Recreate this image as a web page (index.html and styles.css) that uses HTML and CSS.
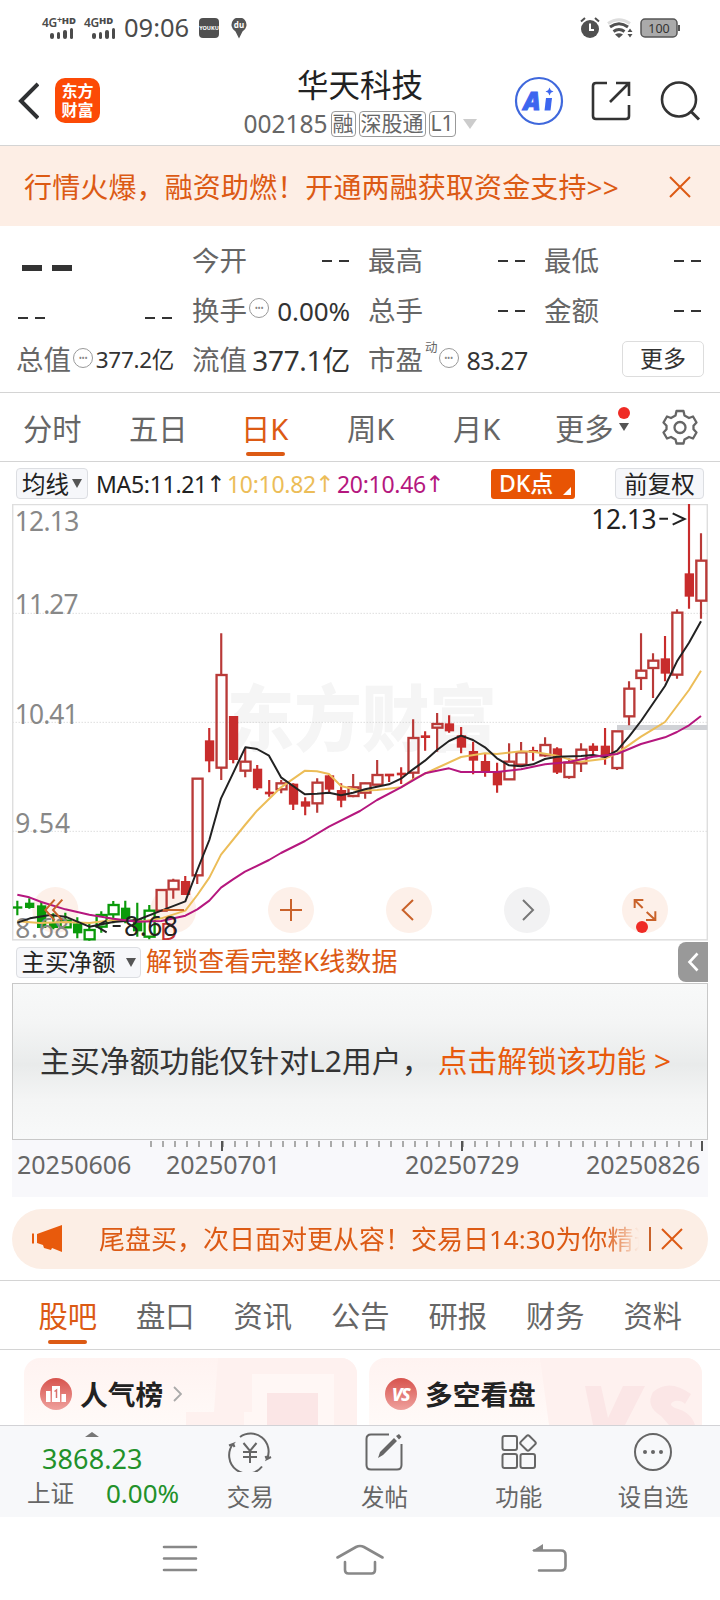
FILE: index.html
```html
<!DOCTYPE html>
<html lang="zh-CN">
<head>
<meta charset="utf-8">
<title>华天科技 002185</title>
<link rel="stylesheet" href="styles.css">
</head>
<body>
<div class="phone">

  <div class="status">
    <div class="sim"><span>4G<sup class="plus">+</sup><b>HD</b></span><i class="bars"><i></i><i></i><i></i><i></i></i></div>
    <div class="sim sim2"><span>4G<b>HD</b></span><i class="bars"><i></i><i></i><i></i><i></i></i></div>
    <span class="clock">09:06</span>
    <span class="youku">YOUKU</span>
    <svg class="pin" width="16" height="21" viewBox="0 0 16 21"><path d="M8 20.500 4.500 13.500A7.500 7.500 0 1 1 11.500 13.500Z" fill="#555"/><text x="8" y="10" font-size="8" font-weight="700" fill="#fff" text-anchor="middle">du</text></svg>
    <svg class="status-right" width="102" height="24" viewBox="0 0 102 24">
      <circle cx="10" cy="13" r="9" fill="#505050"/><path d="M10 7.500V14H14" fill="none" stroke="#fff" stroke-width="2"/><path d="M1 5.500 5 2M19 5.500 15 2" stroke="#505050" stroke-width="2"/>
      <path d="M28 7.500Q39 0 50 7.500" fill="none" stroke="#ddd" stroke-width="3"/>
      <path d="M30 11Q39 4.500 48 11M33.500 15.500Q39 11.500 44.500 15.500" fill="none" stroke="#505050" stroke-width="3"/><path d="M39 22 35 18.500Q39 16 43 18.500Z" fill="#505050"/><path d="M47.500 16 50 12.500 52.500 16ZM47.500 18 50 21.500 52.500 18Z" fill="#505050"/>
      <rect x="61" y="3" width="36" height="18" rx="4" fill="#aaa" stroke="#555" stroke-width="1.500"/><path d="M99 9V15" stroke="#555" stroke-width="2"/><text x="79" y="16.500" font-size="12.500" fill="#333" text-anchor="middle">100</text>
    </svg>
  </div>

  <header class="header">
    <svg class="back" width="22" height="38" viewBox="0 0 22 38"><path d="M21 2 4 19 21 36" fill="none" stroke="#2f3133" stroke-width="4"/></svg>
    <div class="logo"><span>东方</span><span>财富</span></div>
    <div class="titles">
      <div class="title">华天科技</div>
      <div class="sub"><span class="code">002185</span><span class="tag">融</span><span class="tag">深股通</span><span class="tag">L1</span><i class="tri light"></i></div>
    </div>
    <svg class="head-icons" width="190" height="50" viewBox="0 0 190 50">
      <circle cx="25" cy="25" r="23" fill="none" stroke="#3f68dc" stroke-width="2.200"/>
      <text x="9.500" y="33.500" font-size="25" font-weight="900" font-style="italic" fill="#3c66ef" stroke="#3c66ef" stroke-width="1" class="ai">A</text>
      <path d="M32 22H38L36.500 34.500H30.500Z" fill="#3c66ef"/><path d="M35.500 11.500 36.800 14.200 39.500 15.500 36.800 16.800 35.500 19.500 34.200 16.800 31.500 15.500 34.200 14.200Z" fill="#3c66ef"/>
      <path d="M93 7H82Q79 7 79 10V40Q79 43 82 43H112Q115 43 115 40V29M102 7H115V20M115 7 96 26" fill="none" stroke="#333" stroke-width="2.600"/>
      <circle cx="165" cy="23.500" r="17" fill="none" stroke="#333" stroke-width="2.600"/><path d="M177 35.500 185 43.500" stroke="#333" stroke-width="3"/>
    </svg>
  </header>

  <div class="banner"><span>行情火爆，融资助燃！开通两融获取资金支持&gt;&gt;</span>
    <svg width="24" height="24" viewBox="0 0 24 24"><path d="M2 2 22 22M22 2 2 22" stroke="#dc5a14" stroke-width="2"/></svg></div>

  <section class="quote">
    <div class="cell big"><i></i><i></i></div>
    <div class="cell"><span>今开</span><em class="dash"><i></i><i></i></em></div>
    <div class="cell"><span>最高</span><em class="dash"><i></i><i></i></em></div>
    <div class="cell"><span>最低</span><em class="dash"><i></i><i></i></em></div>
    <div class="cell low"><em class="dash"><i></i><i></i></em><em class="dash"><i></i><i></i></em></div>
    <div class="cell"><span>换手</span><u class="dots">•••</u><b class="v26">0.00%</b></div>
    <div class="cell"><span>总手</span><em class="dash"><i></i><i></i></em></div>
    <div class="cell"><span>金额</span><em class="dash"><i></i><i></i></em></div>
    <div class="cell"><span>总值</span><u class="dots">•••</u><b class="v22">377.2亿</b></div>
    <div class="cell"><span>流值</span><b class="v28">377.1亿</b></div>
    <div class="cell"><span>市盈</span><sup class="dyn">动</sup><u class="dots">•••</u><b class="v25">83.27</b></div>
    <div class="cell end"><span class="more">更多</span></div>
  </section>

  <nav class="periods">
    <span>分时</span><span>五日</span><span class="on">日K</span><span>周K</span><span>月K</span><span class="pmore">更多<i class="dot"></i><i class="tri"></i></span>
    <svg width="36" height="36" viewBox="0 0 36 36"><path d="M14.500 2H21.500L22.500 6.500 27 9 31 7.500 34.500 13.500 31.500 16.800V20.200L34.500 23.500 31 29.500 27 28 22.500 30.500 21.500 34.500H14.500L13.500 30.500 9 28 5 29.500 1.500 23.500 4.500 20.200V16.800L1.500 13.500 5 7.500 9 9 13.500 6.500Z" fill="none" stroke="#666" stroke-width="2.300" stroke-linejoin="round"/><circle cx="18" cy="18.500" r="5.500" fill="none" stroke="#666" stroke-width="2.300"/></svg>
  </nav>

  <div class="ma">
    <span class="btn b-avg">均线<i class="tri"></i></span>
    <span class="m m5">MA5:11.21<s>↑</s></span><span class="m m10">10:10.82<s>↑</s></span><span class="m m20">20:10.46<s>↑</s></span>
    <span class="dk">DK点<i></i></span>
    <span class="btn b-adj">前复权</span>
  </div>

  <div class="chart">
    <svg width="696" height="437" viewBox="36 42 2088 1311" id="chart">
      <g class="watermark"><text x="680" y="765" textLength="810" lengthAdjust="spacingAndGlyphs">东方财富</text></g>
      <g class="grid"><path d="M38 370H2122M38 697H2122M38 1024H2122"/></g>
      <rect x="38" y="43.500" width="2084" height="1306" fill="none" stroke="#dedede" stroke-width="4.500"/>
      <rect x="1851" y="705" width="271" height="15" fill="#d0d2d6"/>
      <g class="pads"><circle cx="166" cy="1260" r="69"/><circle cx="520" cy="1260" r="69"/><circle cx="873" cy="1260" r="69"/><circle cx="1227" cy="1260" r="69"/><circle cx="1581" cy="1260" r="69" fill="#f2f2f3"/><circle cx="1935" cy="1260" r="69"/></g>
      <g id="candles"></g>
      <text x="480" y="1349" class="dmark">D</text>
      <g class="axis"><text x="44" y="123" textLength="194">12.13</text><text x="44" y="372" textLength="192">11.27</text><text x="44" y="701" textLength="192">10.41</text><text x="46" y="1028" textLength="164">9.54</text><text x="46" y="1343" textLength="162">8.68</text></g>
      <g class="lines">
        <polyline stroke="#ecbd58" points="52,1294 120,1299 196,1296 268,1299 340,1290 430,1294 484,1285 556,1262 592,1215 628,1163 663,1094 735,1005 771,962 843,892 915,842 951,844 987,852 1023,888 1080,902 1131,900 1203,892 1239,868 1311,834 1383,801 1455,790 1491,792 1563,784 1599,785 1671,797 1707,808 1743,815 1815,806 1851,790 1923,740 1959,718 1995,696 2067,600 2103,542"/>
        <polyline stroke="#222" points="52,1298 90,1285 150,1275 196,1280 268,1310 340,1296 412,1290 484,1262 556,1234 592,1140 628,1050 663,925 699,850 736,772 771,777 807,797 843,862 879,888 915,913 951,911 987,908 1023,916 1059,908 1095,898 1131,890 1167,883 1203,866 1239,838 1275,812 1311,780 1347,753 1383,737 1419,750 1455,772 1491,805 1527,826 1563,829 1599,823 1635,807 1671,800 1743,798 1779,795 1815,801 1851,782 1887,740 1923,693 1995,588 2031,514 2067,458 2103,394"/>
        <polyline stroke="#b5177e" points="52,1214 88,1222 124,1236 196,1258 268,1274 340,1286 412,1295 484,1293 556,1277 592,1258 628,1232 663,1193 699,1168 735,1145 807,1110 843,1089 915,1053 987,1010 1080,963 1131,930 1203,892 1275,850 1347,835 1383,846 1491,846 1563,838 1635,823 1707,816 1779,800 1851,792 1923,762 1995,742 2031,726 2067,706 2103,678"/>
      </g>
      <g class="marks"><path d="M320 1292 288 1308 320 1327M338 1308H362M1978 86H2004M2018 70 2054 87 2018 104"/><text x="372" y="1339" textLength="162">8.68</text><text x="1774" y="117" textLength="196">12.13</text></g>
      <g class="signs" fill="none" stroke="#c9622a" stroke-width="6"><path d="M164 1229 136 1260 164 1291M187 1229 159 1260 187 1291"/><path d="M488 1260H552"/><path d="M840 1260H906M873 1227V1293"/><path d="M1239 1230 1208 1260 1239 1290"/><path stroke="#777" d="M1569 1230 1599 1260 1569 1290"/><path d="M1904 1254V1230H1930M1905 1231 1928 1254M1966 1264V1290H1938M1965 1289 1940 1266"/></g>
      <circle cx="1926" cy="1311" r="18" fill="#ef2b25"/>
    </svg>
  </div>

  <div class="subrow">
    <span class="btn b-net">主买净额<i class="tri"></i></span><span class="unlock">解锁查看完整K线数据</span>
    <span class="side"><svg width="12" height="20" viewBox="0 0 12 20"><path d="M10.500 1.500 2.500 10 10.500 18.500" fill="none" stroke="#fff" stroke-width="2.600"/></svg></span>
  </div>

  <div class="l2"><span class="l2a">主买净额功能仅针对L2用户，</span><span class="l2b">点击解锁该功能 &gt;</span></div>

  <div class="dates">
    <svg width="696" height="12" viewBox="12 1140 696 12"><path d="M150 1144H698" stroke="#aaa" stroke-width="6" stroke-dasharray="2 10"/><path d="M222 1141V1151M462 1141V1151M702 1141V1151" stroke="#555" stroke-width="2"/></svg>
    <div class="labels"><span>20250606</span><span>20250701</span><span>20250729</span><span>20250826</span></div>
  </div>

  <div class="pill">
    <svg width="32" height="28" viewBox="0 0 32 28"><path d="M1 8.500V18.500" stroke="#e85a0c" stroke-width="2"/><path d="M5 9 30 0V27L20 23 19 25 12 23 11 20 5 18Z" fill="#e85a0c"/></svg>
    <span class="pill-text">尾盘买，次日面对更从容！交易日14:30为你精选</span>
    <i class="bar"></i>
    <svg width="22" height="22" viewBox="0 0 22 22"><path d="M1 1 21 21M21 1 1 21" stroke="#dc5a14" stroke-width="2"/></svg>
  </div>

  <nav class="infos"><span class="on">股吧</span><span>盘口</span><span>资讯</span><span>公告</span><span>研报</span><span>财务</span><span>资料</span></nav>

  <section class="cards">
    <div class="card">
      <svg class="deco" width="333" height="67" viewBox="0 0 333 67"><path d="M194 0H333V67H162V54H190Z" fill="#fef1ef"/><path d="M228 16H310V67H220V54H228Z" fill="#fff7f5"/><path d="M243 35H294V67H243Z" fill="#fbe6e6"/></svg>
      <svg class="ic" width="32" height="32" viewBox="0 0 32 32"><defs><linearGradient id="r" x2="0" y2="1"><stop stop-color="#d7534d"/><stop offset="1" stop-color="#efa19d"/></linearGradient></defs><circle cx="16" cy="16" r="16" fill="url(#r)"/><path d="M6 13H10.500V24H6ZM12 8H20V24H12ZM21.500 16H26V24H21.500Z" fill="#fff"/><path d="M14.500 13.500 16.500 12V20" fill="none" stroke="#d9726d" stroke-width="1.500"/></svg>
      <b>人气榜</b>
      <svg class="chev" width="9" height="16" viewBox="0 0 9 16"><path d="M1 1 8 8 1 15" fill="none" stroke="#aaa" stroke-width="1.800"/></svg>
    </div>
    <div class="card">
      <svg class="deco" width="333" height="67" viewBox="0 0 333 67"><path d="M171 0H333V67H180Z" fill="#fef1ef"/><path d="M216 28H232L239 60 254 28H276L256 67H224Z" fill="#fbe6e6"/><path d="M322 36Q300 20 284 34Q276 48 292 58L300 67H326Q322 54 306 50Q298 46 306 43Q312 42 316 46Z" fill="#fbe6e6"/></svg>
      <svg class="ic" width="32" height="32" viewBox="0 0 32 32"><circle cx="16" cy="16" r="16" fill="url(#r)"/><text x="15.500" y="22.500" class="vs" text-anchor="middle">VS</text></svg>
      <b>多空看盘</b>
    </div>
  </section>

  <div class="actions">
    <div class="index"><i class="up"></i><span class="pt">3868.23</span><div><span class="nm">上证</span><span class="pc">0.00%</span></div></div>
    <div class="act"><svg width="44" height="40" viewBox="0 0 44 40"><g fill="none" stroke="#666" stroke-width="2"><path d="M12 5A18 18 0 0 1 39 27L43 25M39 27.500 37.500 24M34 34.500A18 18 0 0 1 5 12L1 13.500M5 11.500 6.500 15"/><path d="M15.500 11 22 19 28.500 11M22 19V31M15 20H29M15 25H29"/></g></svg><span>交易</span></div>
    <div class="act"><svg width="44" height="40" viewBox="0 0 44 40"><path d="M27 2.500H9Q4.500 2.500 4.500 7V33Q4.500 37.500 9 37.500H35Q39.500 37.500 39.500 33V12" fill="none" stroke="#666" stroke-width="2"/><path d="M16 26 18 20 32 6 35 9 21 23ZM34 4 37 2 39.500 5 37 7.500Z" fill="#666"/></svg><span>发帖</span></div>
    <div class="act"><svg width="44" height="40" viewBox="0 0 44 40"><g fill="none" stroke="#666" stroke-width="2"><rect x="5.500" y="4" width="14.500" height="14" rx="2"/><rect x="5.500" y="22" width="14.500" height="14" rx="2"/><rect x="23.500" y="22" width="14.500" height="14" rx="2"/><rect x="25" y="5" width="12" height="12" rx="2" transform="rotate(45 31 11)"/></g></svg><span>功能</span></div>
    <div class="act"><svg width="44" height="40" viewBox="0 0 44 40"><circle cx="22" cy="20" r="18" fill="none" stroke="#666" stroke-width="2"/><g fill="#666"><circle cx="14" cy="20" r="2"/><circle cx="22" cy="20" r="2"/><circle cx="30" cy="20" r="2"/></g></svg><span>设自选</span></div>
  </div>

  <div class="sysnav">
    <svg width="36" height="30" viewBox="0 0 36 30"><path d="M2 3H34M2 14.500H34M2 26H34" stroke="#888" stroke-width="2.600" stroke-linecap="round"/></svg>
    <svg width="50" height="32" viewBox="0 0 50 32"><path d="M2.500 13.500 21 3Q25 1 29 3L47.500 13.500M10 18V26Q10 29.500 13.500 29.500H36.500Q40 29.500 40 26V18" fill="none" stroke="#888" stroke-width="2.600" stroke-linecap="round"/></svg>
    <svg width="36" height="30" viewBox="0 0 36 30"><path d="M2 6.500H29Q33.500 6.500 33.500 11V22Q33.500 26.500 29 26.500H7" fill="none" stroke="#888" stroke-width="2.600" stroke-linecap="round"/><path d="M0 7 11 0V7Z" fill="#888"/></svg>
  </div>
</div>
<script src="chart.js"></script>
</body>
</html>
```
FILE: styles.css
```css
* { box-sizing: border-box; }
body { margin: 0; background: #fff; font-family: "Noto Sans", "Noto Sans CJK SC", sans-serif; color: #666; }
i, em { font-style: normal; }
svg { display: block; flex: none; }
.phone { width: 720px; height: 1600px; overflow: hidden; background: #fff; white-space: nowrap; }
.tri { display: inline-block; border: 5px solid transparent; border-top: 9px solid #555; border-bottom: 0; flex: none; }

.status { height: 56px; display: flex; align-items: center; padding: 0 38px 0 42px; color: #4b4b4b; }
.sim { width: 37px; height: 22px; font-size: 12px; line-height: 11px; font-weight: 600; letter-spacing: -.3px; }
.sim > span { display: flex; height: 11px; }
.sim b { font-size: 9.500px; line-height: 8px; letter-spacing: 0; }
.plus { font-size: 9px; line-height: 6px; }
.sim2 { margin-left: 5px; width: 32px; }
.bars { display: flex; gap: 3px; align-items: flex-end; height: 11px; margin-left: 8px; }
.bars i { width: 3.500px; height: 6px; border-radius: 2px; background: #4b4b4b; }
.bars i:nth-child(2) { height: 7px; }
.bars i:nth-child(3) { height: 9px; }
.bars i:nth-child(4) { height: 11px; }
.clock { font-size: 25.500px; margin-left: 8px; width: 69px; line-height: 30px; margin-top: -2px; }
.youku { margin-left: 6px; width: 20px; height: 20px; border-radius: 4px; background: #505050; color: #fff; font-size: 5.500px; line-height: 20px; text-align: center; font-weight: 700; }
.pin { margin-left: 12px; }
.status-right { margin-left: auto; }

.header { height: 90px; border-bottom: 1px solid #d4d4d4; display: flex; align-items: center; padding-left: 17px; }
.logo { width: 45px; height: 45px; border-radius: 10px; margin-left: 16px; background: #fc4a06; color: #fff; font-weight: 700; font-size: 16px; line-height: 19px; display: flex; flex-direction: column; align-items: center; justify-content: center; }
.titles { width: 300px; margin-left: 110px; display: flex; flex-direction: column; align-items: center; }
.title { font-size: 31.500px; line-height: 46px; color: #222; margin-top: -2px; }
.sub { display: flex; align-items: center; height: 28px; margin-top: 2px; }
.code { font-size: 24.500px; line-height: 28px; margin-right: 3px; }
.tag { height: 26px; border: 1.500px solid #999; border-radius: 4px; font-size: 21px; line-height: 23px; padding: 0 1px; margin-right: 3px; }
.light { border-left-width: 7px; border-right-width: 7px; border-top: 10px solid #ccc; margin-left: 4px; }
.head-icons { margin-left: 4px; }
.ai { font-family: "Noto Sans", sans-serif; }

.banner { height: 80px; background: #fdeee5; color: #dc5a14; font-size: 28px; line-height: 80px; letter-spacing: .13px; padding: 2px 28px 0 24px; display: flex; align-items: center; justify-content: space-between; }

.quote { height: 167px; border-bottom: 1px solid #d4d4d4; padding: 10px 0 0 16px; display: grid; grid-template-columns: repeat(4, 158px); grid-template-rows: 50px 50px 48px; column-gap: 18px; }
.cell { display: flex; align-items: center; justify-content: space-between; font-size: 27.500px; line-height: 40px; }
.cell b { font-weight: 400; color: #333; }
.dash { display: flex; gap: 7px; padding-right: 1px; }
.dash i { width: 10px; height: 2px; background: #333; }
.low { padding: 14px 1px 0 2px; }
.big { justify-content: flex-start; gap: 10px; padding: 14px 0 0 6px; }
.big i { width: 20px; height: 6px; background: #333; }
.dots { width: 20px; height: 20px; border: 1.500px solid #999; border-radius: 50%; text-decoration: none; font-size: 8.500px; line-height: 17px; text-align: center; color: #888; letter-spacing: -.3px; align-self: flex-start; margin: 12px 0 0 2px; flex: none; }
.v26 { font-size: 26px; margin-left: auto; letter-spacing: -.1px; }
.v22 { font-size: 22.500px; margin-left: auto; letter-spacing: -.3px; }
.v28 { font-size: 28px; letter-spacing: -.3px; }
.v25 { font-size: 25px; margin: 0 auto 0 8px; letter-spacing: -.5px; }
.dyn { font-size: 12.500px; line-height: 14px; align-self: flex-start; margin: 5px 0 0 2px; width: 13px; }
.dyn + .dots { margin-left: 1px; }
.end { justify-content: flex-end; margin-right: -2px; }
.more { width: 82px; height: 36px; border: 1px solid #ddd; border-radius: 5px; font-size: 23px; line-height: 33px; text-align: center; color: #333; margin-top: -2px; }

.periods { height: 69px; border-bottom: 1px solid #d4d4d4; display: grid; grid-template-columns: 106px 108px 106px 105px 106px 108px 36px; padding-left: 23px; align-items: center; font-size: 29.300px; }
.periods > span { height: 68px; line-height: 72px; position: relative; }
.periods > span:nth-child(3) { padding-left: 4px; }
.periods > span:nth-child(4) { padding-left: 4px; }
.periods > span:nth-child(5) { padding-left: 5px; }
.periods > span:nth-child(6) { padding-left: 1px; }
.on { color: #dc5a14; }
.periods .on::after { content: ""; position: absolute; left: 9px; bottom: 5px; width: 39px; height: 4px; border-radius: 2px; background: #dc5a14; }
.dot { position: absolute; left: 64px; top: 14px; width: 12px; height: 12px; border-radius: 50%; background: #ef2b25; }
.pmore .tri { position: absolute; left: 65px; top: 30px; border-width: 8px 5px 0; }

.ma { height: 42px; display: flex; align-items: center; padding: 1px 16px 0; font-size: 23px; }
.btn { height: 31px; border: 1px solid #dcdee2; border-radius: 4px; background: #f6f7fa; color: #222; font-size: 23.500px; line-height: 28px; display: flex; align-items: center; justify-content: center; flex: none; }
.b-avg { width: 72px; gap: 3px; }
.m { display: flex; align-items: center; flex: none; letter-spacing: -.3px; line-height: 30px; }
.m s { text-decoration: none; width: 15px; margin-left: -1px; font-family: "DejaVu Sans", sans-serif; font-size: 23px; }
.m5 { margin-left: 8px; width: 131px; color: #222; }
.m10 { width: 110px; color: #ecbd58; }
.m20 { color: #b5177e; }
.dk { margin-left: auto; width: 84px; height: 30px; border-radius: 3px; background: #e85404; color: #fff; font-size: 23px; line-height: 29px; padding-left: 8px; position: relative; font-weight: 500; }
.dk i { position: absolute; right: 4px; bottom: 4px; border-left: 8px solid transparent; border-bottom: 8px solid #fff; }
.b-adj { width: 89px; margin-left: 40px; }

.chart { padding-left: 12px; height: 437px; }
.watermark text { font-size: 215px; font-weight: 900; fill: #f5f5f5; font-family: "Noto Sans CJK SC", sans-serif; }
.grid path { stroke: #ccc; stroke-width: 3; stroke-dasharray: 3 6; fill: none; }
.axis text { font-size: 79px; fill: #888; }
.pads { fill: #fdf0e9; }
.lines { fill: none; stroke-width: 6; stroke-linejoin: round; }
.marks { fill: #222; font-size: 79px; }
.marks path { fill: none; stroke: #222; stroke-width: 6; }
.dmark { font-size: 72px; fill: #c83232; }

.subrow { height: 42px; display: flex; align-items: center; padding-left: 16px; }
.b-net { width: 125px; gap: 10px; }
.unlock { font-size: 26px; line-height: 36px; color: #dc5a14; margin: -2px 0 0 5px; letter-spacing: .15px; }
.side { width: 30px; height: 40px; background: #999; border-radius: 8px 0 0 8px; margin: 0 12px 0 auto; display: flex; align-items: center; justify-content: center; }

.l2 { height: 157px; margin: 0 12px; border: 1px solid #c8c8c8; background: linear-gradient(#f8f9f9 0%, #f4f5f5 25%, #e9ebeb 52%, #f4f5f5 75%, #f8f9f9 100%); display: flex; align-items: center; padding: 0 0 6px 27px; font-size: 29.800px; color: #333; }
.l2a { letter-spacing: .1px; }
.l2b { color: #e85a0c; margin-left: 6px; }

.dates { height: 57px; margin: 0 12px; background: #f8f8fb; }
.labels { height: 25px; display: grid; grid-template-columns: 149px 239px 181px 1fr; padding-left: 5px; font-size: 25px; line-height: 25px; }

.pill { margin: 12px 12px 0; height: 60px; border-radius: 30px; background: #fceee5; color: #dc5a14; display: flex; align-items: center; padding-left: 20px; }
.pill-text { margin-left: 35px; width: 540px; overflow: hidden; font-size: 26px; line-height: 40px; -webkit-mask-image: linear-gradient(90deg, #000 505px, transparent 540px); mask-image: linear-gradient(90deg, #000 505px, transparent 540px); }
.bar { width: 1.500px; height: 24px; background: #c9622a; margin: 0 10px; }

.infos { margin-top: 11px; height: 70px; border-top: 1px solid #d4d4d4; border-bottom: 1px solid #d4d4d4; display: grid; grid-template-columns: repeat(7, 97.500px); padding-left: 19px; font-size: 29.300px; line-height: 71px; text-align: center; }
.infos span { position: relative; height: 68px; }
.infos .on::after { content: ""; position: absolute; left: 29px; bottom: 5px; width: 39px; height: 4px; border-radius: 2px; background: #dc5a14; }

.cards { height: 75px; padding: 8px 18px 0 24px; display: grid; grid-template-columns: 333px 333px; column-gap: 12px; }
.card { border-radius: 16px 16px 0 0; background: linear-gradient(#fff3f1, #fffaf8); height: 67px; overflow: hidden; display: flex; align-items: center; padding: 5px 0 0 16px; position: relative; color: #222; font-size: 27.700px; }
.card > * { position: relative; }
.card .deco { position: absolute; left: 0; top: 0; }
.card b { margin-left: 8px; line-height: 40px; }
.chev { margin-left: 10px; }
.vs { font-size: 18px; font-weight: 800; font-style: italic; fill: #fff; letter-spacing: -1.500px; }

.actions { height: 92px; background: #f7f8fa; border-top: 1px solid #d2d2d6; display: grid; grid-template-columns: 183px repeat(4, 134.300px); }
.index { padding-top: 6px; }
.up { display: block; width: 14px; margin-left: 85px; border: 7px solid transparent; border-bottom: 5px solid #777; border-top: 0; }
.pt { display: block; font-size: 27px; line-height: 34px; color: #22912a; padding-left: 42px; margin-top: 5px; letter-spacing: .1px; }
.index div { display: flex; padding-left: 27px; line-height: 34px; }
.nm { font-size: 23.500px; width: 79px; }
.pc { font-size: 26px; color: #22912a; }
.act { display: flex; flex-direction: column; align-items: center; padding-top: 6px; font-size: 23.500px; line-height: 34px; }
.act span { margin-top: 8px; }

.sysnav { height: 84px; display: flex; align-items: flex-start; padding: 27px 0 0 162px; }
.sysnav svg:nth-child(2) { margin-left: 137px; }
.sysnav svg:nth-child(3) { margin-left: 147px; }
```
FILE: chart.js
```javascript
// Each candle: high, body top, body bottom, low, filled
const data = [
  [1232,1251,1254,1276,1],[1225,1240,1252,1256,1],[1235,1248,1312,1312,1],[1270,1300,1312,1318,1],
  [1268,1292,1312,1315,0],[1282,1302,1328,1345,1],[1300,1320,1348,1352,0],[1264,1275,1310,1328,0],
  [1233,1245,1273,1300,0],[1232,1255,1285,1300,1],[1238,1290,1322,1340,1],[1245,1262,1340,1348,0],
  [1198,1200,1262,1262,0],[1166,1172,1198,1226,0],[1158,1175,1213,1215,1],[866,866,1156,1182,0],
  [714,753,812,847,1],[430,555,833,870,0],[680,680,808,820,1],[775,815,842,862,0],
  [825,838,893,900,1],[870,907,911,920,1],[870,880,898,910,0],[880,883,942,960,1],
  [922,936,948,976,1],[865,878,940,968,0],[855,858,897,908,1],[880,902,930,952,1],
  [852,892,918,922,0],[878,880,908,926,0],[810,855,884,884,0],[852,853,857,876,1],
  [832,850,854,882,1],[688,744,848,868,0],[724,738,742,782,1],[669,702,713,785,0],
  [676,702,722,728,1],[711,738,771,790,1],[755,785,810,853,1],[790,815,843,860,1],
  [818,845,884,908,1],[760,815,868,868,0],[756,787,824,824,0],[770,782,786,812,1],
  [742,765,796,800,0],[772,777,846,852,1],[805,818,861,866,0],[760,779,820,846,0],
  [760,769,781,798,1],[714,769,800,824,1],[724,724,834,840,0],[574,596,679,706,0],
  [430,542,564,600,0],[490,512,534,624,0],[438,507,549,574,1],[358,368,554,566,0],
  [42,252,318,356,1],[130,212,332,386,0]
];
const step = (2103 - 52) / (data.length - 1);
document.getElementById('candles').innerHTML = data.map(([hi, top, bottom, lo, filled], i) => {
  const x = 52 + i * step;
  const color = i < 12 ? '#0a9a0a' : filled ? '#c82c2c' : '#b93a38';
  const wicks = `<path d="M${x} ${hi}V${top}M${x} ${bottom}V${lo}" stroke="${color}" stroke-width="6.500"/>`;
  const body = filled
    ? `<rect x="${x - 13}" y="${top - 2}" width="28" height="${bottom - top + 4}" fill="${color}"/>`
    : `<rect x="${x - 14}" y="${top}" width="30" height="${bottom - top}" fill="none" stroke="${color}" stroke-width="7"/>`;
  return wicks + body;
}).join('');
```
